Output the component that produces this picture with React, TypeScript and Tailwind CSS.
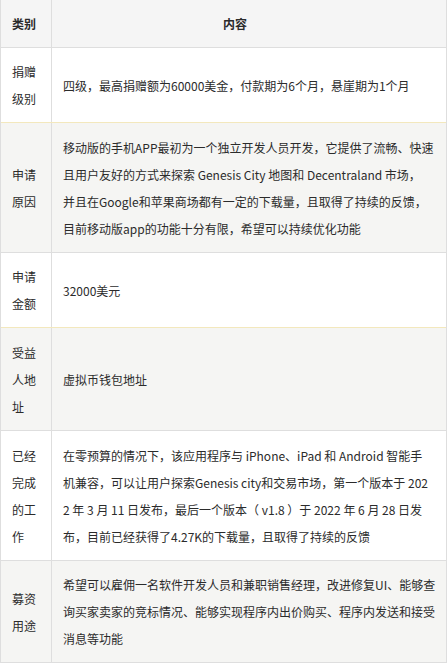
import React from "react";

type Row = { h: string; bg: string; top: string; left: string[]; right: string[] };

const rows: Row[] = [
  {
    h: "h-[75px]",
    bg: "bg-white",
    top: "border-[#dedede]",
    left: ["捐赠", "级别"],
    right: ["四级，最高捐赠额为60000美金，付款期为6个月，悬崖期为1个月"],
  },
  {
    h: "h-[130px]",
    bg: "bg-[#f5f5f3]",
    top: "border-[#f3e8bd]",
    left: ["申请", "原因"],
    right: [
      "移动版的手机APP最初为一个独立开发人员开发，它提供了流畅、快速",
      "且用户友好的方式来探索 Genesis City 地图和 Decentraland 市场，",
      "并且在Google和苹果商场都有一定的下载量，且取得了持续的反馈，",
      "目前移动版app的功能十分有限，希望可以持续优化功能",
    ],
  },
  {
    h: "h-[75px]",
    bg: "bg-white",
    top: "border-[#dedede]",
    left: ["申请", "金额"],
    right: ["32000美元"],
  },
  {
    h: "h-[103px]",
    bg: "bg-[#f5f5f3]",
    top: "border-[#f3e8bd]",
    left: ["受益", "人地", "址"],
    right: ["虚拟币钱包地址"],
  },
  {
    h: "h-[130px]",
    bg: "bg-white",
    top: "border-[#dedede]",
    left: ["已经", "完成", "的工", "作"],
    right: [
      "在零预算的情况下，该应用程序与 iPhone、iPad 和 Android 智能手",
      "机兼容，可以让用户探索Genesis city和交易市场，第一个版本于 202",
      "2 年 3 月 11 日发布，最后一个版本（ v1.8 ）于 2022 年 6 月 28 日发",
      "布，目前已经获得了4.27K的下载量，且取得了持续的反馈",
    ],
  },
  {
    h: "h-[102px]",
    bg: "bg-[#f5f5f3]",
    top: "border-[#dedede]",
    left: ["募资", "用途"],
    right: [
      "希望可以雇佣一名软件开发人员和兼职销售经理，改进修复UI、能够查",
      "询买家卖家的竞标情况、能够实现程序内出价购买、程序内发送和接受",
      "消息等功能",
    ],
  },
];

export default function App() {
  return (
    <div className="w-[448px] h-[664px] bg-white">
      <div className="w-[447px] border-l border-r border-b border-[#dedede] font-['Noto_Sans_CJK_SC','Noto_Sans',sans-serif] text-[12px] leading-[27px] text-[#2b2b2b]">
        <div className="flex h-[47px] bg-[#f5f5f5]">
          <div className="w-[51px] shrink-0 border-r border-[#dedede] px-[11px] flex items-center font-bold">
            类别
          </div>
          <div className="flex-1 pl-[11px] pr-[39px] flex items-center justify-center font-bold">
            内容
          </div>
        </div>
        {rows.map((r, i) => (
          <div key={i} className={`flex border-t ${r.top} ${r.h} ${r.bg}`}>
            <div className="w-[51px] shrink-0 border-r border-[#dedede] px-[11px] flex flex-col justify-center">
              {r.left.map((t, j) => (
                <span key={j} className="block whitespace-nowrap">
                  {t}
                </span>
              ))}
            </div>
            <div className="flex-1 px-[11px] flex flex-col justify-center overflow-hidden">
              {r.right.map((t, j) => (
                <span key={j} className="block whitespace-nowrap">
                  {t}
                </span>
              ))}
            </div>
          </div>
        ))}
      </div>
    </div>
  );
}
